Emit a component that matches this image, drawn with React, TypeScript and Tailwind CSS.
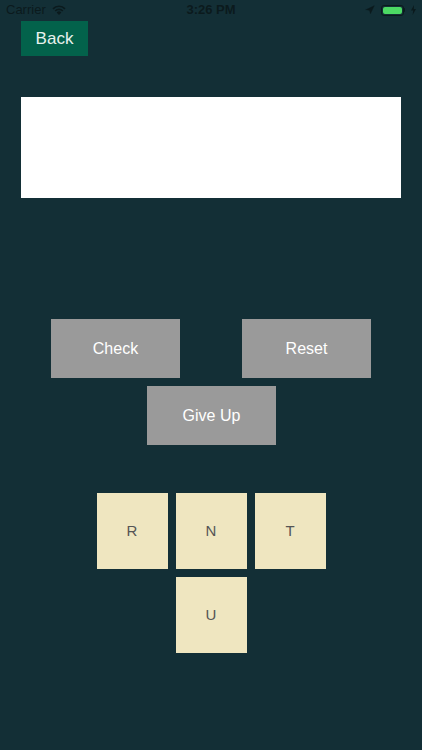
import { Navigation } from 'lucide-react';

function StatusBar() {
  return (
    <div className="relative flex h-5 items-center justify-between px-[6px] text-[13px] text-[#0b1a1d] [font-family:'Liberation_Sans',Arial,sans-serif]">
      <div className="flex items-center gap-[6px]">
        <span>Carrier</span>
        <svg width="14" height="10" viewBox="0 0 14 10" fill="#0b1a1d">
          <path d="M7 10 L4.6 7.4 A3.4 3.4 0 0 1 9.4 7.4 Z" />
          <path d="M2.6 5.4 A6.2 6.2 0 0 1 11.4 5.4 L10.2 6.6 A4.5 4.5 0 0 0 3.8 6.6 Z" />
          <path d="M0.4 3.2 A9.2 9.2 0 0 1 13.6 3.2 L12.4 4.4 A7.5 7.5 0 0 0 1.6 4.4 Z" />
        </svg>
      </div>
      <span className="absolute left-1/2 -translate-x-1/2 font-bold">3:26 PM</span>
      <div className="flex items-center gap-[6px]">
        <Navigation className="h-[10px] w-[10px]" fill="#0b1a1d" stroke="#0b1a1d" strokeWidth={1} />
        <div className="flex items-center">
          <div className="flex h-[11px] w-[23px] items-center rounded-[3px] border border-[#0b1a1d] p-[1px]">
            <div className="h-full w-full rounded-[2px] bg-[#4cd964]" />
          </div>
          <div className="h-[4px] w-[1.5px] rounded-r bg-[#0b1a1d]" />
        </div>
        <svg width="5" height="10" viewBox="0 0 5 10" fill="#0b1a1d">
          <path d="M3 0 L0 5.5 H2.2 L1.6 10 L5 4 H2.8 Z" />
        </svg>
      </div>
    </div>
  );
}

export default function App() {
  const tilesTop = ['R', 'N', 'T'];

  return (
    <div className="h-[750px] w-full overflow-hidden bg-[#132f36] [font-family:'Liberation_Sans',Arial,sans-serif]">
      <StatusBar />

      {/* Back */}
      <button className="ml-[21px] mt-[1px] flex h-[35px] w-[67px] items-center justify-center bg-[#03624b] text-[17px] text-[#e8f2ee]">
        Back
      </button>

      {/* Answer box */}
      <div className="mx-[21px] mt-[41px] h-[101px] bg-white" />

      {/* Actions */}
      <div className="mt-[121px] flex gap-[62px] pl-[51px]">
        <button className="flex h-[59px] w-[129px] items-center justify-center bg-[#9a9a9a] text-[16px] text-white">
          Check
        </button>
        <button className="flex h-[59px] w-[129px] items-center justify-center bg-[#9a9a9a] text-[16px] text-white">
          Reset
        </button>
      </div>
      <div className="mt-[8px] flex justify-center">
        <button className="ml-[1px] flex h-[59px] w-[129px] items-center justify-center bg-[#9a9a9a] text-[16px] text-white">
          Give Up
        </button>
      </div>

      {/* Letter tiles */}
      <div className="mt-[48px] flex justify-center gap-[8px]">
        {tilesTop.map((l) => (
          <div key={l} className="flex h-[76px] w-[71px] items-center justify-center bg-[#efe6c0] text-[15px] text-[#555]">
            {l}
          </div>
        ))}
      </div>
      <div className="mt-[8px] flex justify-center">
        <div className="flex h-[76px] w-[71px] items-center justify-center bg-[#efe6c0] text-[15px] text-[#555]">
          U
        </div>
      </div>
    </div>
  );
}
